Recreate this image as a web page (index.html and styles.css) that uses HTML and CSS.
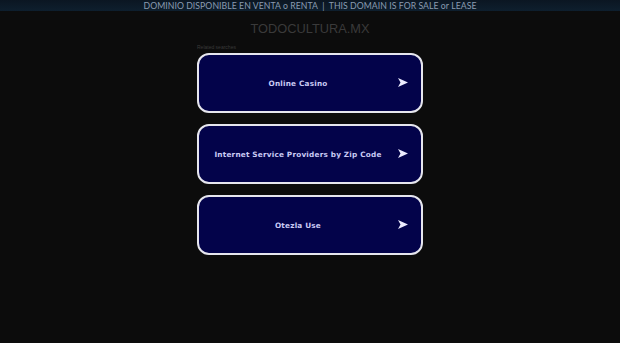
FILE: index.html
```html
<!DOCTYPE html>
<html>
<head>
<meta charset="utf-8">
<link rel="stylesheet" href="styles.css">
</head>
<body>
<div class="topbar">DOMINIO DISPONIBLE EN VENTA o RENTA &nbsp;|&nbsp; THIS DOMAIN IS FOR SALE or LEASE</div>
<div class="title">TODOCULTURA.MX</div>
<div class="wrap">
  <div class="related">Related searches</div>
  <a class="item" href="#"><span class="label">Online Casino</span><svg class="arrow" viewBox="0 0 10 9"><polygon points="0,0 10,4.5 0,9 2.5,4.5" /></svg></a>
  <a class="item" href="#"><span class="label">Internet Service Providers by Zip Code</span><svg class="arrow" viewBox="0 0 10 9"><polygon points="0,0 10,4.5 0,9 2.5,4.5" /></svg></a>
  <a class="item" href="#"><span class="label">Otezla Use</span><svg class="arrow" viewBox="0 0 10 9"><polygon points="0,0 10,4.5 0,9 2.5,4.5" /></svg></a>
</div>
</body>
</html>
```
FILE: styles.css
```css
html, body {
  margin: 0;
  padding: 0;
  background: #0c0c0c;
  height: 100%;
}
.topbar {
  height: 11px;
  line-height: 11px;
  background: linear-gradient(#0b1622, #0e1f2e);
  color: #8a9bb0;
  font-family: "Lato", "DejaVu Sans", sans-serif;
  font-size: 8.7px;
  text-align: center;
  white-space: nowrap;
  letter-spacing: 0.05px;
}
.title {
  text-align: center;
  font-family: "Liberation Sans", Arial, sans-serif;
  font-size: 12.8px;
  color: #3a3a3a;
  margin-top: 11px;
  line-height: 14px;
}
.wrap {
  width: 226px;
  margin: 0 auto;
  display: flex;
  flex-direction: column;
}
.related {
  font-family: "Liberation Sans", Arial, sans-serif;
  font-size: 5px;
  color: #3a3a3a;
  line-height: 6px;
  margin-top: 8px;
  height: 9px;
}
.item {
  box-sizing: border-box;
  height: 60px;
  margin-bottom: 11px;
  border: 2px solid #e6e6ee;
  border-radius: 12px;
  background: #03034a;
  display: flex;
  align-items: center;
  justify-content: center;
  position: relative;
  text-decoration: none;
  padding-right: 24px;
}
.label {
  font-family: "DejaVu Sans", Verdana, sans-serif;
  font-weight: bold;
  font-size: 7.3px;
  color: #c9caf4;
  letter-spacing: 0.2px;
}
.arrow {
  position: absolute;
  right: 13px;
  top: 50%;
  width: 10px;
  height: 9px;
  margin-top: -5px;
  fill: #ececff;
}
```
